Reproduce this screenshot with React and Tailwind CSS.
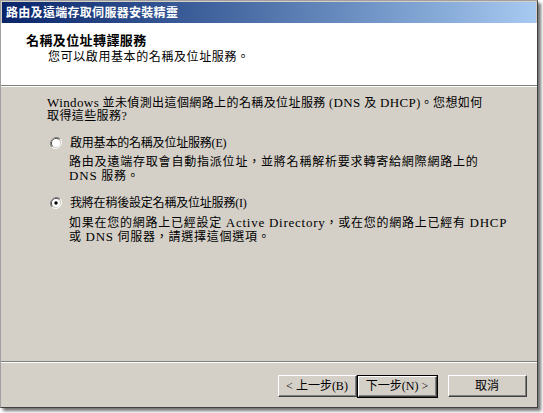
import React from "react";

const font = { fontFamily: '"Liberation Serif", "Noto Sans CJK TC", serif' };

function L({ children }) {
  return <span className="text-[13px]">{children}</span>;
}

function Radio({ checked }) {
  return (
    <svg width="12" height="12" viewBox="0 0 12 12" className="shrink-0">
      <path d="M10.2 1.8 A6 6 0 0 0 1.8 10.2" fill="none" stroke="#808080" strokeWidth="1" />
      <path d="M9.5 2.5 A5 5 0 0 0 2.5 9.5" fill="none" stroke="#404040" strokeWidth="1" />
      <path d="M1.8 10.2 A6 6 0 0 0 10.2 1.8" fill="none" stroke="#ffffff" strokeWidth="1" />
      <path d="M2.5 9.5 A5 5 0 0 0 9.5 2.5" fill="none" stroke="#d4d0c8" strokeWidth="1" />
      <circle cx="6" cy="6" r="4" fill="#ffffff" />
      {checked && <circle cx="6" cy="6" r="1.7" fill="#000" />}
    </svg>
  );
}

function Btn({ children, def }) {
  const inner = (
    <div className="w-full h-full border-t border-l border-t-white border-l-white border-r border-b border-r-[#404040] border-b-[#404040]">
      <div className="w-full h-full flex items-center justify-center border-r border-b border-r-[#808080] border-b-[#808080] text-[12px] text-black">
        {children}
      </div>
    </div>
  );
  if (def) {
    return <div className="w-[81px] h-[23px] border border-black bg-[#d4d0c8]">{inner}</div>;
  }
  return <div className="w-[79px] h-[22px] bg-[#d4d0c8]">{inner}</div>;
}

export default function App() {
  return (
    <div className="w-[543px] h-[413px] bg-white" style={font}>
      <div className="w-[538px] h-[408px] flex flex-col bg-[#d4d0c8] border border-[#a0a0a0] border-r-[#404040] border-b-[#404040] shadow-[3px_3px_3px_rgba(0,0,0,0.55)]">
        <div className="h-[21px] mx-[1px] mt-[1px] flex items-center pl-[4px] bg-gradient-to-r from-[#0a246a] to-[#a6caf0]">
          <span className="text-white font-bold text-[12px] tracking-[0.3px] leading-none">路由及遠端存取伺服器安裝精靈</span>
        </div>
        <div className="h-[62px] bg-white flex flex-col pl-[25px] pt-[10px]">
          <div className="font-bold text-[13px] tracking-[0.4px] leading-[16px] text-black">名稱及位址轉譯服務</div>
          <div className="pl-[22px] text-[12px] tracking-[0.6px] leading-[16px] text-black">您可以啟用基本的名稱及位址服務。</div>
        </div>
        <div className="h-[1px] bg-[#808080]" />
        <div className="h-[1px] bg-white" />
        <div className="flex-1 flex flex-col pl-[46px] pr-[10px] pt-[9px] text-[12px] text-black">
          <div className="leading-[13px] tracking-[0.4px] whitespace-nowrap">
            <L>Windows</L> 並未偵測出這個網路上的名稱及位址服務 (<L>DNS</L> 及 <L>DHCP</L>)。您想如何<br />取得這些服務?
          </div>
          <div className="flex items-center gap-[8px] mt-[13px] pl-[3px] leading-[14px]">
            <Radio />
            <span className="tracking-[-0.2px]">啟用基本的名稱及位址服務(E)</span>
          </div>
          <div className="pl-[22px] mt-[6px] leading-[13px] tracking-[0.8px] whitespace-nowrap">
            路由及遠端存取會自動指派位址，並將名稱解析要求轉寄給網際網路上的<br /><L>DNS</L> 服務。
          </div>
          <div className="flex items-center gap-[8px] mt-[13px] pl-[3px] leading-[14px]">
            <Radio checked />
            <span className="tracking-[-0.2px]">我將在稍後設定名稱及位址服務(I)</span>
          </div>
          <div className="pl-[22px] mt-[6px] leading-[13px] tracking-[0.75px] whitespace-nowrap">
            如果在您的網路上已經設定 <L>Active Directory</L>，或在您的網路上已經有 <L>DHCP</L><br />或 <L>DNS</L> 伺服器，請選擇這個選項。
          </div>
        </div>
        <div className="h-[1px] bg-[#808080]" />
        <div className="h-[1px] bg-white" />
        <div className="h-[44px] flex items-start justify-end pt-[12px] pr-[10px]">
          <Btn>&lt; 上一步(B)</Btn>
          <Btn def>下一步(N) &gt;</Btn>
          <div className="w-[10px]" />
          <Btn>取消</Btn>
        </div>
      </div>
    </div>
  );
}
